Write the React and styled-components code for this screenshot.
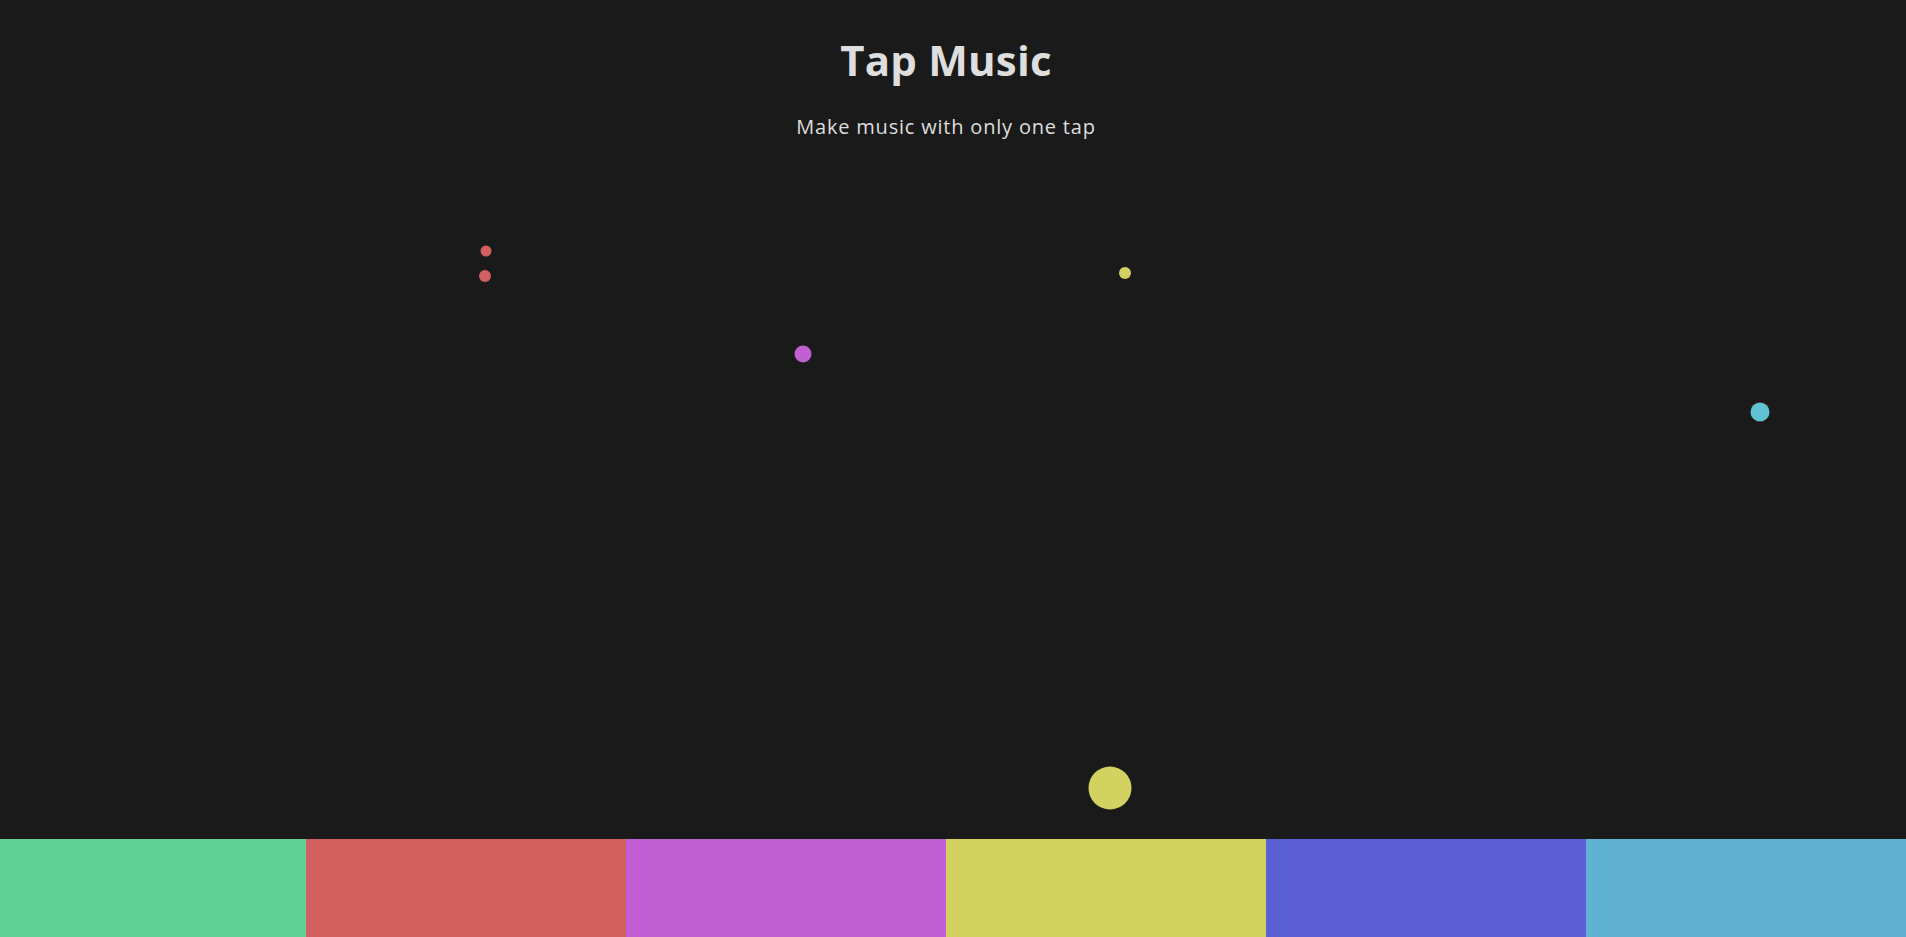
import React from "react";
import styled, { createGlobalStyle } from "styled-components";

const GlobalStyle = createGlobalStyle`
  * { box-sizing: border-box; }
  html, body { margin: 0; padding: 0; background: #1a1a1a; }
  body { font-family: "Open Sans", "Liberation Sans", sans-serif; color: #dcdcdc; overflow: hidden; }
`;

const Page = styled.div`
  position: relative;
  height: 100vh;
  display: flex;
  flex-direction: column;
  background: #1a1a1a;
`;

const Header = styled.header`
  display: flex;
  flex-direction: column;
  align-items: center;
  padding: 35px 14px 0 0;
`;

const Title = styled.h1`
  margin: 0;
  font-size: 42px;
  line-height: 50px;
  font-weight: 700;
  letter-spacing: 0.2px;
  color: #dedede;
`;

const Subtitle = styled.p`
  margin: 30px 0 0;
  font-size: 20px;
  line-height: 24px;
  font-weight: 400;
  letter-spacing: 0.8px;
  color: #dedede;
`;

const Stage = styled.main`
  flex: 1;
`;

const Ball = styled.div`
  position: absolute;
  width: ${(p) => p.$size}px;
  height: ${(p) => p.$size}px;
  border-radius: 50%;
  background: ${(p) => p.$color};
  transform: translate(-50%, -50%);
`;

const Pads = styled.div`
  display: grid;
  grid-template-columns: 306px repeat(5, 1fr);
  height: 98px;
`;

const Pad = styled.div`
  background: ${(p) => p.$color};
`;

const padColors = ["#60d394", "#d36060", "#c060d3", "#d3d160", "#5b60d4", "#60b2d3"];

const balls = [
  { x: 486, y: 251, size: 11, color: "#d36060" },
  { x: 485, y: 276, size: 12, color: "#d36060" },
  { x: 803, y: 354, size: 17, color: "#c060d3" },
  { x: 1125, y: 273, size: 12, color: "#d3d160" },
  { x: 1760, y: 412, size: 19, color: "#60c2d3" },
  { x: 1110, y: 788, size: 43, color: "#d3d160" },
];

export default function App() {
  return (
    <>
      <GlobalStyle />
      <Page>
        <Header>
          <Title>Tap Music</Title>
          <Subtitle>Make music with only one tap</Subtitle>
        </Header>
        <Stage>
          {balls.map((b, i) => (
            <Ball key={i} $size={b.size} $color={b.color} style={{ left: b.x, top: b.y }} />
          ))}
        </Stage>
        <Pads>
          {padColors.map((c) => (
            <Pad key={c} $color={c} />
          ))}
        </Pads>
      </Page>
    </>
  );
}
